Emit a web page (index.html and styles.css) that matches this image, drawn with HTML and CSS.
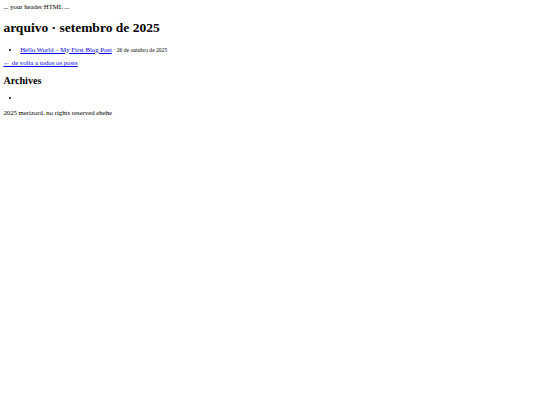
FILE: index.html
```html
<!DOCTYPE html>
<html lang="pt">
<head>
<meta charset="utf-8">
<title>arquivo · setembro de 2025</title>
<link rel="stylesheet" href="styles.css">
</head>
<body class="page">
<div class="site-header">... your header HTML ...</div>
<main class="content">
  <h1 class="title">arquivo · setembro de 2025</h1>
  <ul class="post-list">
    <li class="post-item"><a class="post-link" href="#">Hello World – My First Blog Post</a> <span class="post-date">· 26 de outubro de 2025</span></li>
  </ul>
  <p class="back"><a class="back-link" href="#">← de volta a todos os posts</a></p>
  <h2 class="archives-title">Archives</h2>
  <ul class="archives-list">
    <li class="archives-item"></li>
  </ul>
</main>
<footer class="site-footer">2025 merizord. no rights reserved ehehe</footer>
</body>
</html>
```
FILE: styles.css
```css
html {
  background: #fff;
}
.page {
  margin: 3.375px;
  font-family: "Liberation Serif", "Times New Roman", serif;
  font-size: 6.75px;
  color: #000;
}
.title {
  font-size: 13.5px;
  font-weight: bold;
  margin: 9.4px 0 9.8px;
}
.post-list,
.archives-list {
  margin: 6.75px 0;
  padding-left: 16.875px;
}
.post-date {
  font-size: 5.625px;
}
a {
  color: #0000ee;
}
.back {
  margin: 6.75px 0;
}
.archives-title {
  font-size: 10.125px;
  font-weight: bold;
  margin: 8.4px 0;
}
.archives-item {
  min-height: 7.76px;
}
```
